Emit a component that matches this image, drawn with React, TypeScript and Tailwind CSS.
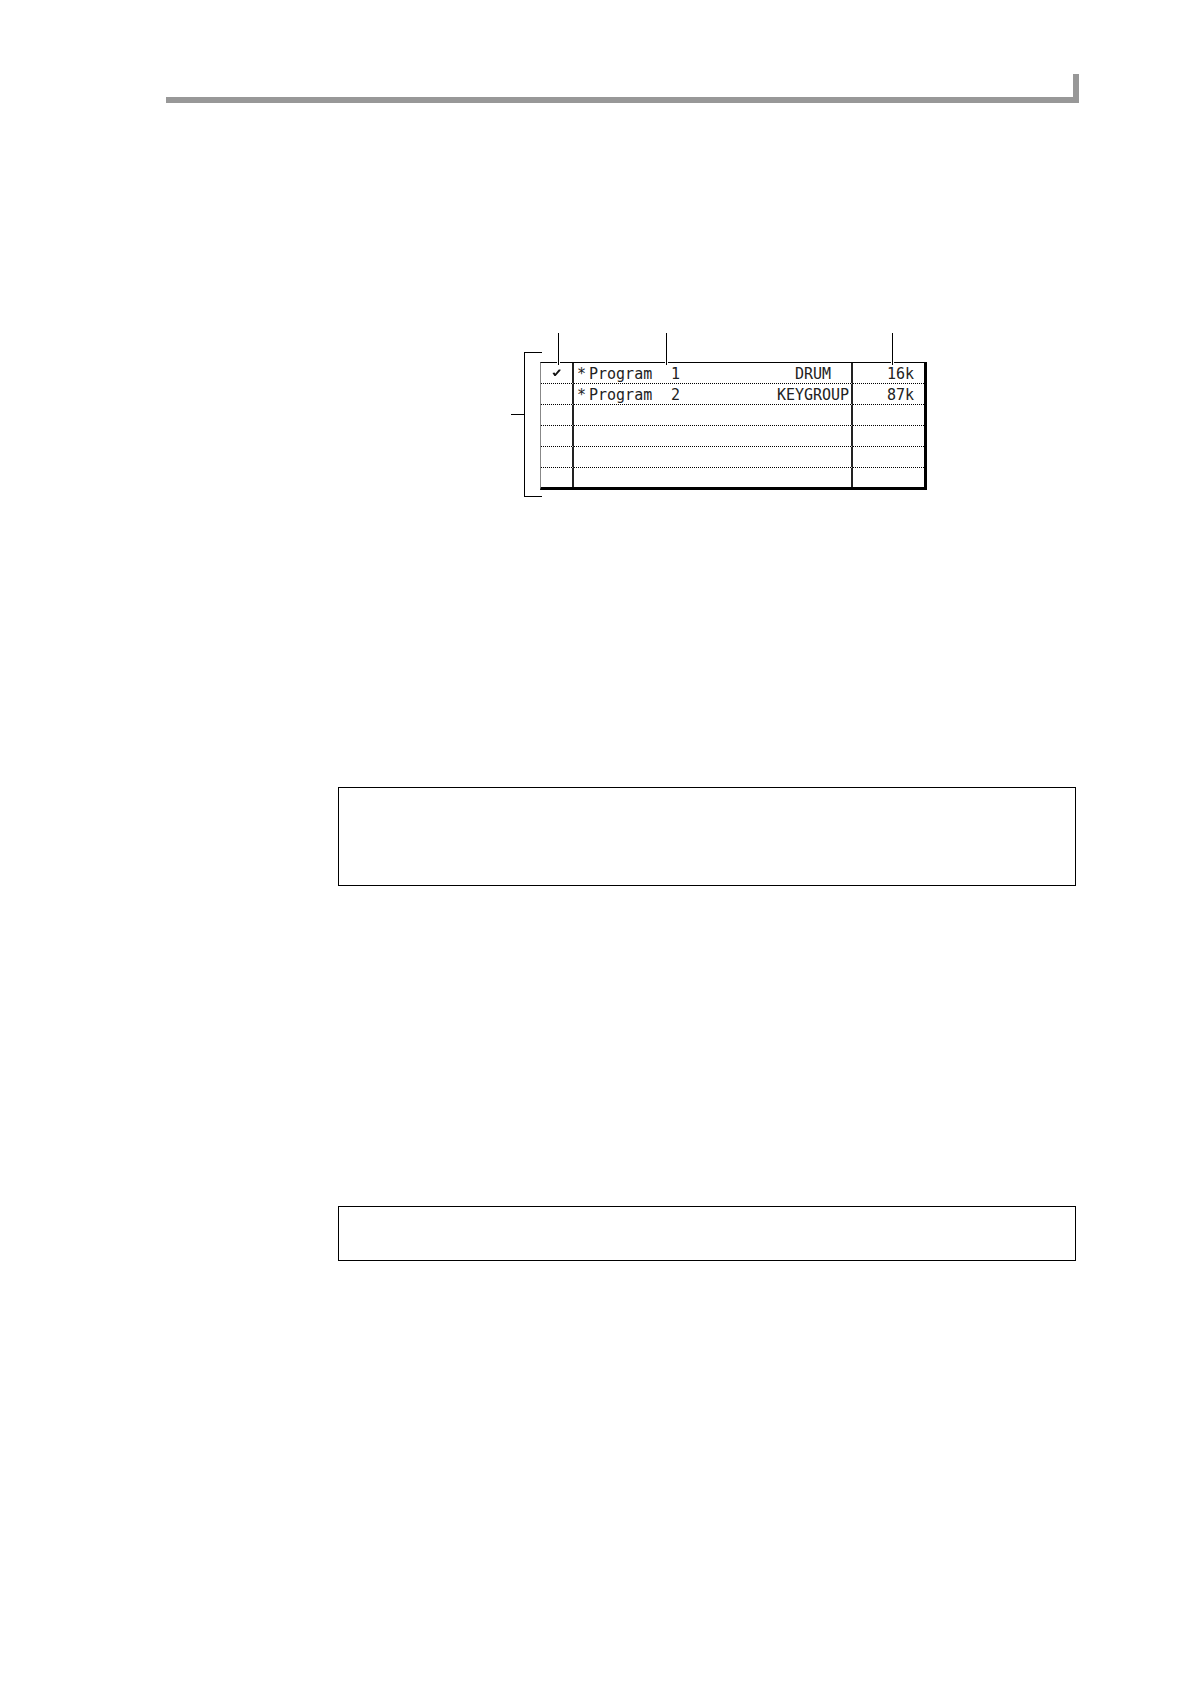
import React from "react";

const programs = [
  { selected: true, name: "Program", number: "1", type: "DRUM", size: "16k" },
  { selected: false, name: "Program", number: "2", type: "KEYGROUP", size: "87k" },
  null,
  null,
  null,
  null,
];

const CheckMark = () => (
  <svg width="9" height="8" viewBox="0 0 9 8" className="mx-auto" role="img" aria-label="Selected">
    <path d="M0.5 4 L2.5 3.6 L3.3 4.8 L6.8 0.5 L8.5 0.5 L8.5 1.6 L3.6 7 L2.4 7 Z" fill="#111" />
  </svg>
);

const Callout = () => (
  <span className="block h-8 w-[3px] border-x border-white bg-black"></span>
);

function ProgramTable() {
  return (
    <table className="w-full table-fixed border-separate border-spacing-0 font-['DejaVu_Sans_Mono',monospace] text-[15px] leading-[18px] text-[#222]">
      <colgroup>
        <col className="w-[33px]" />
        <col />
        <col className="w-[71px]" />
      </colgroup>
      <tbody>
        {programs.map((program, i) => (
          <tr
            key={i}
            className="h-[21px] last:h-[19px] [&>td]:border-b [&>td]:border-b-black [&>td]:[border-bottom-style:dotted] last:[&>td]:border-b-0"
          >
            <td className="border-r-2 border-r-[#222] p-0">{program?.selected && <CheckMark />}</td>
            <td className="border-r-2 border-r-[#222] p-0 pt-0.5">
              {program && (
                <div className="flex pl-[3px]">
                  <span className="w-3">*</span>
                  <span className="w-[82px]">{program.name}</span>
                  <span className="grow">{program.number}</span>
                  <span className="w-[76px] text-center">{program.type}</span>
                </div>
              )}
            </td>
            <td className="p-0 pt-0.5 pr-2.5 text-right">{program?.size}</td>
          </tr>
        ))}
      </tbody>
    </table>
  );
}

export default function App() {
  return (
    <main className="min-h-screen bg-white pt-[74px] pr-[111px] pb-16 pl-[166px]">
      <header className="h-[29px] border-r-6 border-b-6 border-[#989898]"></header>

      <div className="mr-[3px] ml-[172px]">
        <figure className="mt-[230px] ml-[173px] flex w-[416px] items-start">
          <div className="mt-[19px] flex h-[145px] w-[31px] shrink-0">
            <span className="mt-[62px] h-px grow bg-black"></span>
            <span className="h-full w-[18px] border-y border-l border-black"></span>
          </div>
          <div className="relative -ml-0.5 min-w-0 grow pt-[29px]">
            <div className="border-t border-r-3 border-b-3 border-l border-black border-l-[#888]">
              <ProgramTable />
            </div>
            <div className="absolute top-0 left-[17px]"><Callout /></div>
            <div className="absolute top-0 left-[125px]"><Callout /></div>
            <div className="absolute top-0 right-[33px]"><Callout /></div>
          </div>
        </figure>

        <section className="mt-[290px] h-[99px] border border-black"></section>
        <section className="mt-80 h-[55px] border border-black"></section>
      </div>
    </main>
  );
}
